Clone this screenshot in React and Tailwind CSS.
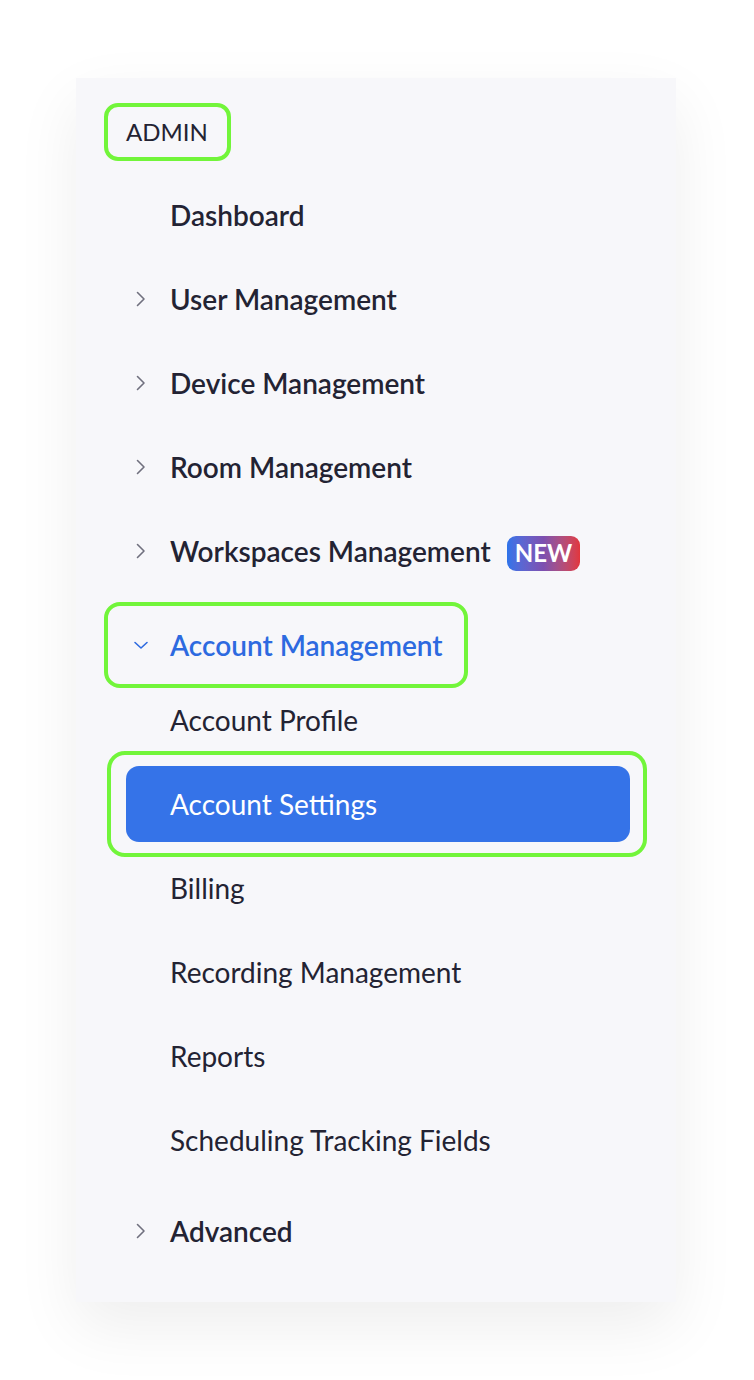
import React from "react"

const font = { fontFamily: "Lato, 'Noto Sans', sans-serif" }

function Chevron({ down = false, color = "#70707e" }) {
    return (
        <svg width="16" height="16" viewBox="0 0 16 16" fill="none" className="shrink-0">
            {down ? (
                <path d="M2 5.5 L8 11 L14 5.5" stroke={color} strokeWidth="1.6" strokeLinecap="round" strokeLinejoin="round" />
            ) : (
                <path d="M4.5 1.5 L11 8 L4.5 14.5" stroke={color} strokeWidth="1.6" strokeLinecap="round" strokeLinejoin="round" />
            )}
        </svg>
    )
}

function TopItem({ label, arrow = true, badge = false, className = "" }) {
    return (
        <div className={"flex items-center h-[62px] pl-[57px] " + className}>
            <div className="w-[37px] flex items-center">{arrow && <Chevron />}</div>
            <span className="text-[28px] font-semibold text-[#232333]">{label}</span>
            {badge && (
                <span className="ml-[16px] mt-[4px] h-[35px] px-[8px] flex items-center rounded-[9px] bg-gradient-to-r from-[#2d74ea] via-[#7d4fb0] to-[#e2353b] text-white text-[24px] font-bold">
                    NEW
                </span>
            )}
        </div>
    )
}

function SubItem({ label, className = "" }) {
    return (
        <div className={"flex items-center h-[62px] pl-[94px] " + className}>
            <span className="text-[28px] text-[#232333]">{label}</span>
        </div>
    )
}

export default function App() {
    return (
        <div className="min-h-[1380px] bg-white pt-[78px] pl-[76px]" style={font}>
            <div className="w-[600px] h-[1224px] bg-[#f7f7fa] shadow-[0_24px_60px_rgba(0,0,0,0.07)] flex flex-col">
                <div className="ml-[28px] mt-[25px] w-[127px] h-[58px] border-4 border-[#72f53a] rounded-[14px] flex items-center pl-[18px]">
                    <span className="text-[24px] text-[#232333]">ADMIN</span>
                </div>

                <TopItem label="Dashboard" arrow={false} className="mt-[23px]" />
                <TopItem label="User Management" className="mt-[22px]" />
                <TopItem label="Device Management" className="mt-[22px]" />
                <TopItem label="Room Management" className="mt-[22px]" />
                <TopItem label="Workspaces Management" badge className="mt-[22px]" />

                <div className="ml-[28px] mt-[20px] w-[364px] h-[86px] border-4 border-[#72f53a] rounded-[16px] flex items-center pl-[25px]">
                    <div className="w-[37px] flex items-center"><Chevron down color="#2d6ae0" /></div>
                    <span className="text-[28px] font-semibold text-[#2d6ae0]">Account Management</span>
                </div>

                <SubItem label="Account Profile" className="mt-[1px]" />

                <div className="ml-[31px] w-[540px] h-[106px] border-4 border-[#72f53a] rounded-[18px] flex items-center pl-[15px] pr-[13px]">
                    <div className="w-full h-[76px] bg-[#3573e8] rounded-[13px] flex items-center pl-[44px]">
                        <span className="text-[28px] text-white">Account Settings</span>
                    </div>
                </div>

                <SubItem label="Billing" />
                <SubItem label="Recording Management" className="mt-[22px]" />
                <SubItem label="Reports" className="mt-[22px]" />
                <SubItem label="Scheduling Tracking Fields" className="mt-[22px]" />
                <TopItem label="Advanced" className="mt-[29px]" />
            </div>
        </div>
    )
}
